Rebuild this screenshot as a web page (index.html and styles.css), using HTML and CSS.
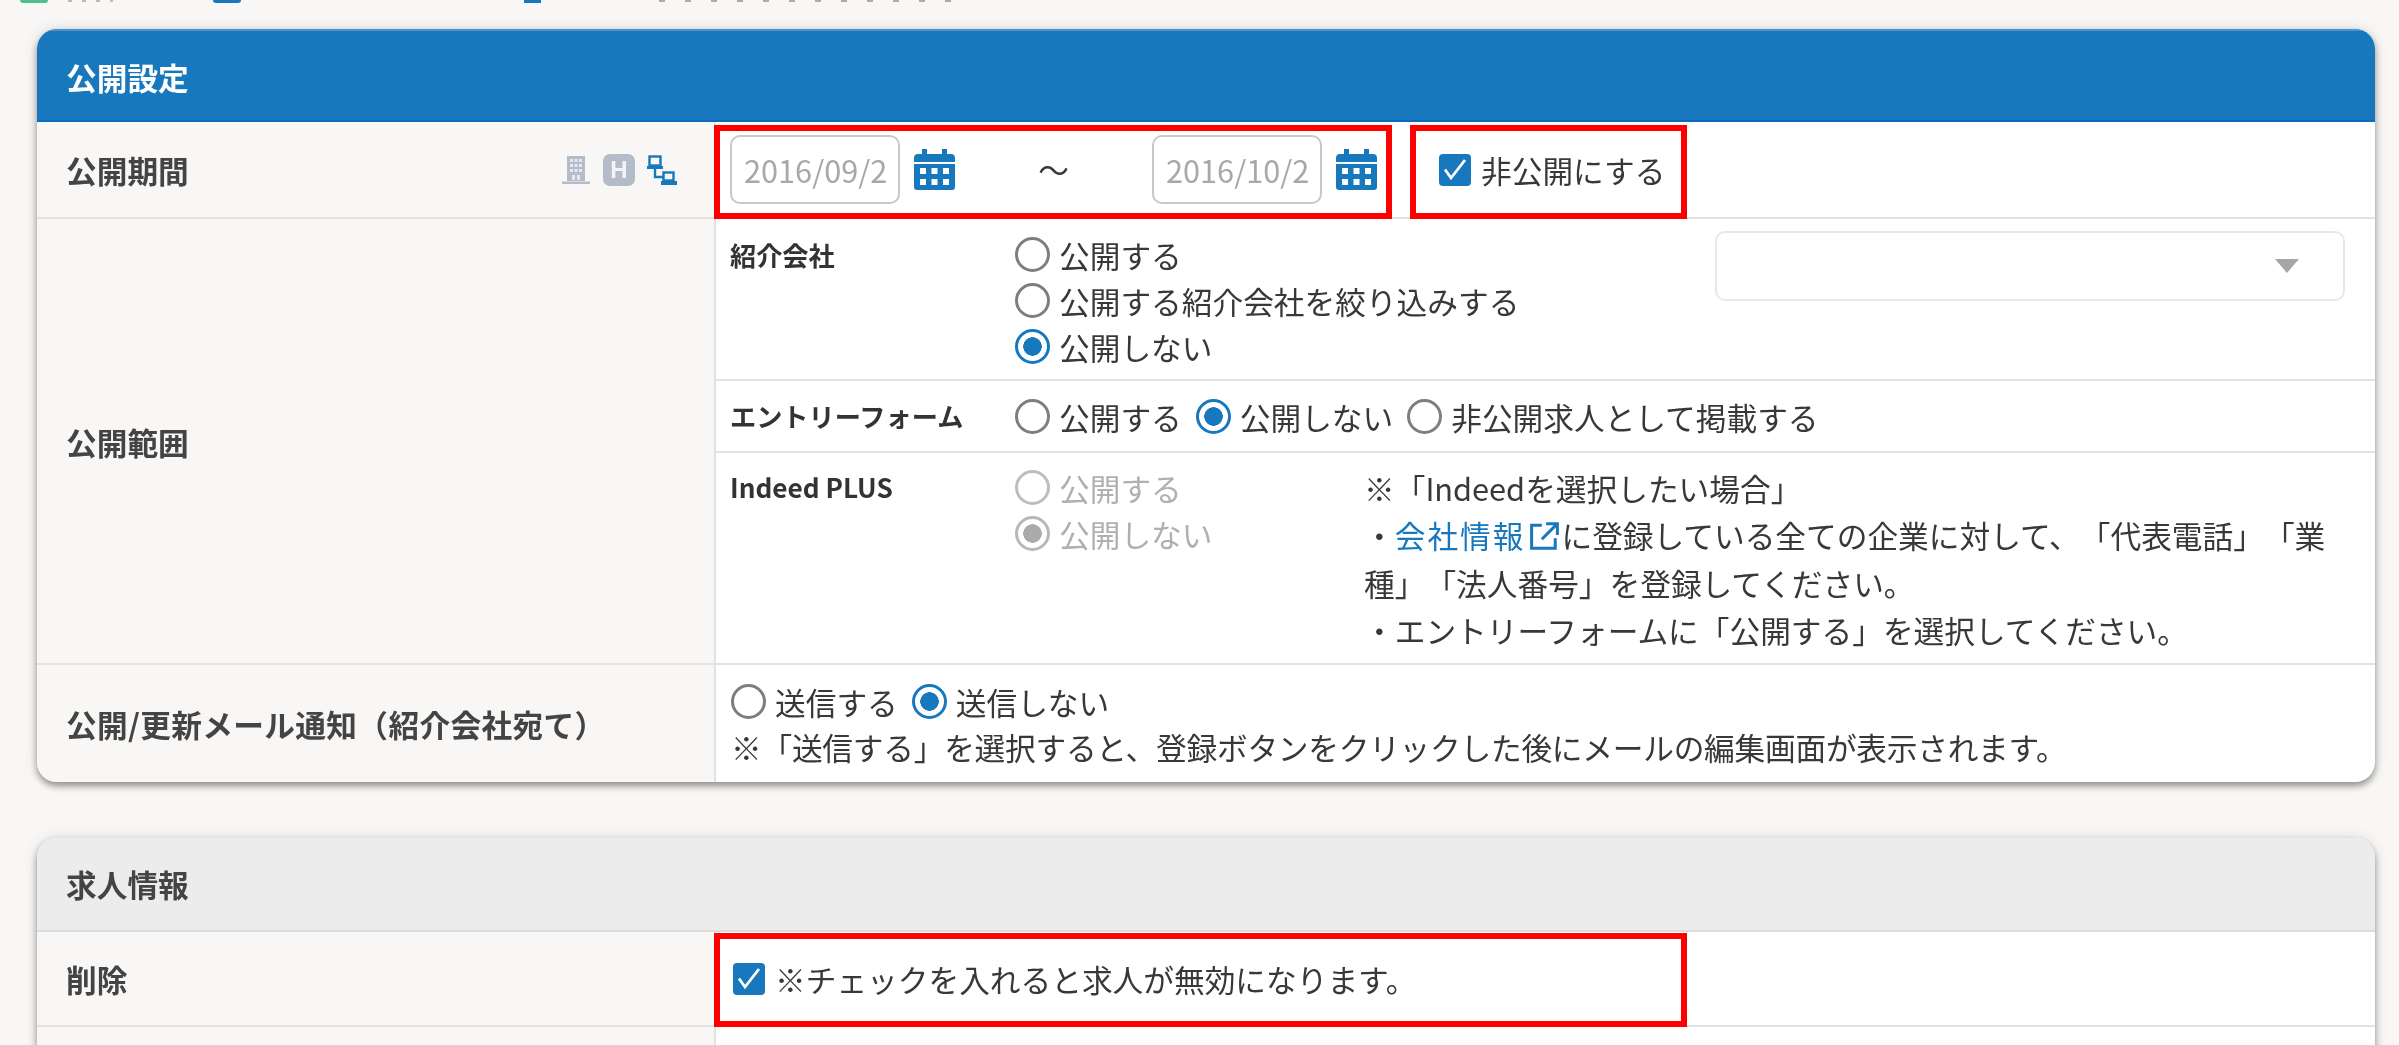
FILE: index.html
```html
<!DOCTYPE html>
<html lang="ja">
<head>
<meta charset="utf-8">
<title>公開設定</title>
<link rel="stylesheet" href="styles.css">
</head>
<body>
<div class="screen">
  <div class="page">
    <div class="topstrip">
      <span class="chip chip-green"></span>
      <span class="chip-text"></span>
      <span class="chip chip-blue"></span>
      <span class="chip chip-blue small"></span>
      <span class="chip-text"></span>
    </div>

    <section class="card">
      <h2 class="card-head primary">公開設定</h2>

      <div class="row row-period">
        <div class="label">
          <span>公開期間</span>
          <span class="label-icons">
            <svg class="ic-building" viewBox="0 0 28 29"><path fill="#b4bcc9" d="M5 1h18v25H5zM0 26.5h28V29H0z"/><g fill="#e8eaee"><rect x="8" y="4" width="3" height="3"/><rect x="12.5" y="4" width="3" height="3"/><rect x="17" y="4" width="3" height="3"/><rect x="8" y="9" width="3" height="3"/><rect x="12.5" y="9" width="3" height="3"/><rect x="17" y="9" width="3" height="3"/><rect x="8" y="14" width="3" height="3"/><rect x="12.5" y="14" width="3" height="3"/><rect x="17" y="14" width="3" height="3"/><rect x="10" y="20" width="3" height="5"/><rect x="15" y="20" width="3" height="5"/></g></svg>
            <span class="ic-h">H</span>
            <svg class="ic-net" viewBox="0 0 31 30"><g fill="none" stroke="#1878be" stroke-width="2.4"><rect x="3.5" y="1.5" width="11" height="9"/><rect x="17.5" y="17.5" width="10" height="8"/><path d="M9 14v8h8"/></g><path fill="#1878be" d="M1 11h16v3H1zM15 26h16v4H15z"/></svg>
          </span>
        </div>
        <div class="value period">
          <input class="date" type="text" value="2016/09/2" readonly>
          <svg class="cal" viewBox="0 0 41 41"><path fill="#1878be" d="M8 0h5v5h15V0h5v5h4q4 0 4 4v4H0V9q0-4 4-4h4zM0 15h41v23q0 3-3 3H3q-3 0-3-3z"/><g fill="#fff"><rect x="6" y="19" width="6" height="6"/><rect x="17.500" y="19" width="6" height="6"/><rect x="29" y="19" width="6" height="6"/><rect x="6" y="30" width="6" height="6"/><rect x="17.500" y="30" width="6" height="6"/><rect x="29" y="30" width="6" height="6"/></g></svg>
          <span class="tilde">〜</span>
          <input class="date" type="text" value="2016/10/2" readonly>
          <svg class="cal" viewBox="0 0 41 41"><path fill="#1878be" d="M8 0h5v5h15V0h5v5h4q4 0 4 4v4H0V9q0-4 4-4h4zM0 15h41v23q0 3-3 3H3q-3 0-3-3z"/><g fill="#fff"><rect x="6" y="19" width="6" height="6"/><rect x="17.500" y="19" width="6" height="6"/><rect x="29" y="19" width="6" height="6"/><rect x="6" y="30" width="6" height="6"/><rect x="17.500" y="30" width="6" height="6"/><rect x="29" y="30" width="6" height="6"/></g></svg>
          <label class="check hide-check">
            <span class="box"><svg viewBox="0 0 32 32"><path d="M6 15.500l6 8.500L26 6" fill="none" stroke="#fff" stroke-width="2.800"/></svg></span>
            <span>非公開にする</span>
          </label>
        </div>
      </div>

      <div class="row">
        <div class="label"><span>公開範囲</span></div>
        <div class="value stack">
          <div class="sub sub-intro">
            <div class="sub-label">紹介会社</div>
            <div class="options wide">
              <label class="opt"><input class="radio" type="radio" name="a">公開する</label>
              <label class="opt"><input class="radio" type="radio" name="a">公開する紹介会社を絞り込みする</label>
              <label class="opt"><input class="radio" type="radio" name="a" checked>公開しない</label>
            </div>
            <div class="select"><span class="arrow"></span></div>
          </div>
          <div class="sub sub-entry">
            <div class="sub-label">エントリーフォーム</div>
            <div class="options inline">
              <label class="opt"><input class="radio" type="radio" name="b">公開する</label>
              <label class="opt"><input class="radio" type="radio" name="b" checked>公開しない</label>
              <label class="opt"><input class="radio" type="radio" name="b">非公開求人として掲載する</label>
            </div>
          </div>
          <div class="sub sub-indeed">
            <div class="sub-label">Indeed PLUS</div>
            <div class="options narrow">
              <label class="opt off"><input class="radio" type="radio" name="c" disabled>公開する</label>
              <label class="opt off"><input class="radio" type="radio" name="c" checked disabled>公開しない</label>
            </div>
            <div class="note">
              <p>※「Indeedを選択したい場合」</p>
              <p>・<a class="link" href="#">会社情報<svg class="ext" viewBox="0 0 27 26"><path d="M11 3H1.500v21.500h22V15M15 1.500h10.500V12M25.500 1.500L11 16" fill="none" stroke="#1878be" stroke-width="2.800"/></svg></a>に登録している全ての企業に対して、「代表電話」「業種」「法人番号」を登録してください。</p>
              <p>・エントリーフォームに「公開する」を選択してください。</p>
            </div>
          </div>
        </div>
      </div>

      <div class="row row-mail">
        <div class="label"><span class="label-wide">公開/更新メール通知（紹介会社宛て）</span></div>
        <div class="value mail">
          <div class="options inline">
            <label class="opt"><input class="radio" type="radio" name="d">送信する</label>
            <label class="opt"><input class="radio" type="radio" name="d" checked>送信しない</label>
          </div>
          <p class="mail-note">※「送信する」を選択すると、登録ボタンをクリックした後にメールの編集画面が表示されます。</p>
        </div>
      </div>
    </section>

    <section class="card second">
      <h2 class="card-head muted">求人情報</h2>
      <div class="row row-delete">
        <div class="label"><span>削除</span></div>
        <div class="value">
          <label class="check">
            <span class="box"><svg viewBox="0 0 32 32"><path d="M6 15.500l6 8.500L26 6" fill="none" stroke="#fff" stroke-width="2.800"/></svg></span>
            <span>※チェックを入れると求人が無効になります。</span>
          </label>
        </div>
      </div>
      <div class="row row-next">
        <div class="label"></div>
        <div class="value"></div>
      </div>
    </section>
  </div>

  <div class="annotations">
    <div class="mark mark-dates"></div>
    <div class="mark mark-hide"></div>
    <div class="mark mark-delete"></div>
  </div>
</div>
</body>
</html>
```
FILE: styles.css
```css
* { box-sizing: border-box; }
html, body { margin: 0; padding: 0; }
body {
  background: #f8f7f5;
  color: #383838;
  font-family: "Noto Sans CJK JP", "Noto Sans", sans-serif;
  font-size: 30.7px;
  text-spacing-trim: space-all;
}
p, h2 { margin: 0; font-weight: inherit; font-size: inherit; }

.screen { position: relative; width: 2399px; height: 1045px; overflow: hidden; }
.page { height: 1045px; padding: 0 24px 0 37px; filter: blur(.6px); overflow: hidden; }

.topstrip {
  height: 3px; margin-left: -37px; overflow: hidden;
  display: flex; align-items: flex-start;
}
.chip { display: block; height: 3px; border-radius: 0 0 6px 6px; }
.chip-green { width: 28px; margin-left: 20px; background: #4cc08a; }
.chip-blue { width: 28px; margin-left: 100px; background: #1878be; }
.chip-blue.small { width: 17px; margin-left: 283px; border-radius: 0; }
.chip-text { width: 45px; margin-left: 20px; height: 2px; background: repeating-linear-gradient(90deg, #bbb 0 4px, transparent 4px 14px); }
.chip-text:last-child { width: 300px; margin-left: 118px; background: repeating-linear-gradient(90deg, #aaa 0 6px, transparent 6px 26px); }

.card {
  margin-top: 26px;
  border-radius: 20px;
  box-shadow: 0 4px 7px rgba(0,0,0,.38), 0 0 14px rgba(0,0,0,.12);
  background: #fff;
  overflow: hidden;
}
.card.second { margin-top: 56px; }

.card-head {
  display: flex; align-items: center;
  padding: 0 0 0 29px;
  font-weight: 700;
  line-height: 44px;
}
.card-head.primary { height: 93px; padding-top: 2px; background: #1878be; color: #fff; border-top: 2px solid #4f94cb; border-bottom: 2px solid #0b6cbd; }
.card-head.muted { height: 94px; background: #ececec; color: #444; border-bottom: 2px solid #dcdcdc; }

.row {
  display: grid;
  grid-template-columns: 679px 1fr;
  border-bottom: 2px solid #e2e2e2;
}
.label {
  display: flex; align-items: center; justify-content: space-between;
  padding: 0 29px;
  background: #f8f7f5;
  border-right: 2px solid #e2e2e2;
  font-weight: 700;
  color: #444;
  white-space: nowrap;
}
.label-wide { letter-spacing: .33px; }
.value { padding: 0 30px 0 14px; }

.label-icons { display: flex; align-items: center; margin-right: 8px; }
.ic-building { width: 28px; height: 29px; margin-right: 13px; }
.ic-h {
  width: 32px; height: 32px; margin-right: 11px; border-radius: 7px;
  background: #b4bcc9; color: #f4f4f6;
  font: 700 24px/32px "Liberation Sans", sans-serif;
  text-align: center;
}
.ic-net { width: 31px; height: 30px; }

.row-period { height: 97px; }
.period { display: flex; align-items: center; }
.date {
  width: 170px; height: 69px; padding: 0 12px;
  border: 2px solid #c8c8c8; border-radius: 10px;
  background: #fff; color: #a8a8a8;
  font: inherit;
  outline: none;
}
.cal { width: 41px; height: 41px; margin-left: 14px; flex: none; }
.tilde { width: 197px; text-align: center; flex: none; line-height: 1; }

.check { display: flex; align-items: center; gap: 10px; white-space: nowrap; }
.hide-check { margin-left: 62px; }
.box { display: block; width: 32px; height: 32px; border-radius: 4px; background: #1878be; flex: none; }
.box svg { display: block; width: 100%; height: 100%; }

.stack { padding: 0; }
.sub { display: flex; padding-left: 14px; border-bottom: 2px solid #e2e2e2; }
.sub:last-child { border-bottom: 0; }
.sub-label { width: 285px; flex: none; font-size: 26.2px; font-weight: 700; color: #333; line-height: 46px; white-space: nowrap; }
.sub-intro { height: 162px; padding-top: 12px; }
.sub-intro .sub-label { margin-top: 1px; }
.sub-entry { height: 72px; align-items: center; }
.sub-indeed { height: 210px; padding-top: 11px; }

.options { display: flex; flex-direction: column; }
.options.wide { width: 700px; flex: none; }
.options.narrow { width: 349px; flex: none; }
.options.inline { flex-direction: row; gap: 14px; }
.opt { display: flex; align-items: center; gap: 9px; height: 46px; white-space: nowrap; }
.opt.off { color: #b0b0b0; }

.radio {
  appearance: none; -webkit-appearance: none;
  width: 35px; height: 35px; margin: 0; flex: none;
  border: 3.500px solid #7e7e7e; border-radius: 50%;
  background: #fff;
}
.radio:checked { border-color: #1878be; background: radial-gradient(circle, #1878be 0 9px, #fff 9.500px); }
.radio:disabled { border-color: #bdbdbd; }
.radio:checked:disabled { border-color: #b8b8b8; background: radial-gradient(circle, #ababab 0 9px, #fff 9.500px); }

.select {
  position: relative;
  width: 630px; height: 70px;
  border: 2px solid #e8e8e8; border-radius: 10px;
  background: #fff;
}
.arrow {
  position: absolute; left: 558px; top: 26px;
  border-left: 12px solid transparent; border-right: 12px solid transparent;
  border-top: 14px solid #a6a6a6;
}

.note { width: 970px; flex: none; line-height: 47.4px; }
.link { color: #1878be; text-decoration: none; letter-spacing: 2px; }
.ext { display: inline-block; width: 29px; height: 28px; margin: 0 2px 0 5px; vertical-align: -2px; }

.row-mail { height: 117px; border-bottom: 0; }
.mail { padding-top: 14px; padding-left: 15px; }
.mail-note { line-height: 45px; white-space: nowrap; letter-spacing: -.24px; }
.mail .opt { height: 45px; }

.row-delete { height: 95px; }
.row-delete .value { display: flex; align-items: center; padding-left: 17px; }
.row-next { height: 120px; border-bottom: 0; }

.annotations { position: absolute; inset: 0; pointer-events: none; }
.mark { position: absolute; border: 6px solid #fe0000; }
.mark-dates { left: 714px; top: 125px; width: 678px; height: 94px; }
.mark-hide { left: 1410px; top: 125px; width: 277px; height: 94px; }
.mark-delete { left: 714px; top: 933px; width: 973px; height: 94px; }
```
